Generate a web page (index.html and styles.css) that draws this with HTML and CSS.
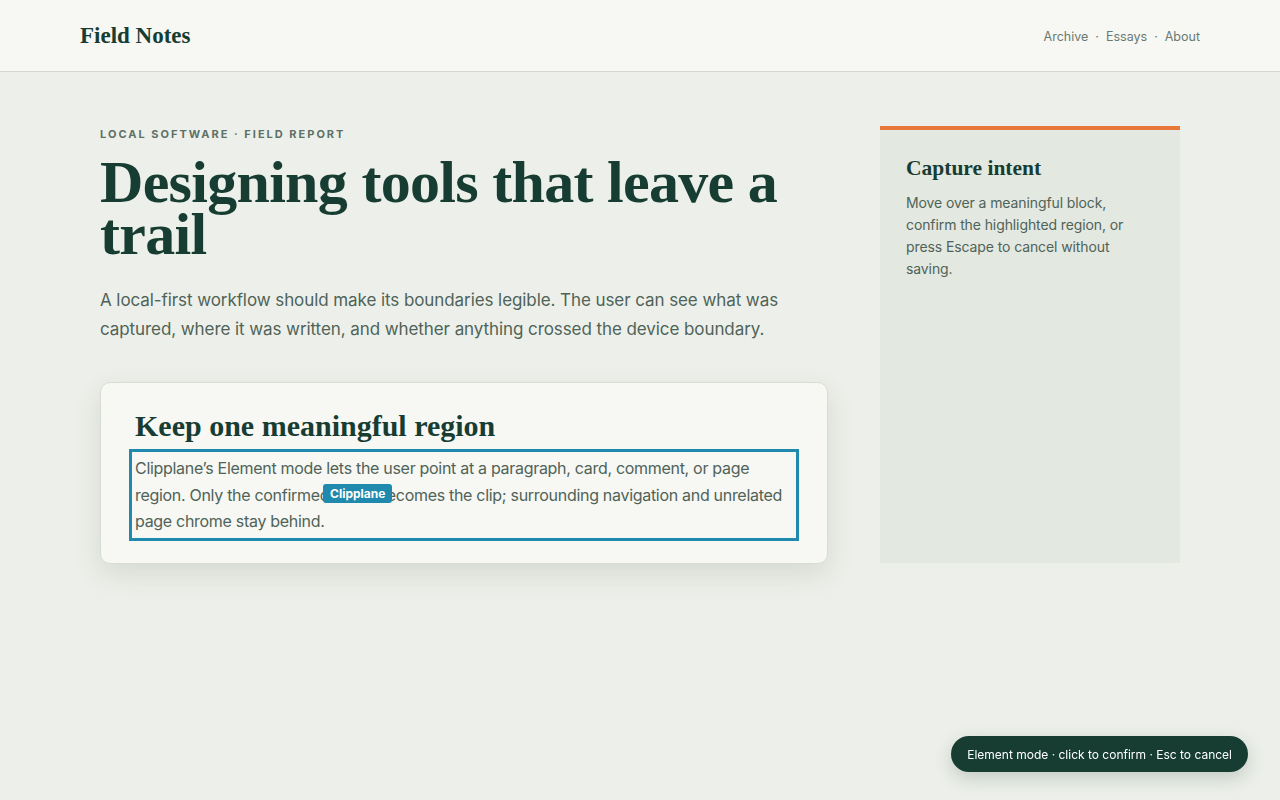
FILE: index.html
```html
<!DOCTYPE html>
<html lang="en">
<head>
  <meta charset="UTF-8">
  <title>Field Notes</title>
  <meta name="viewport" content="width=device-width, initial-scale=1.0">
  <link rel="stylesheet" href="styles.css">
</head>
<body>

  <!-- top bar -->
  <header class="site-header">
    <a class="brand" href="#">Field Notes</a>
    <nav class="site-nav">
      <a href="#">Archive</a>
      <span class="dot">·</span>
      <a href="#">Essays</a>
      <span class="dot">·</span>
      <a href="#">About</a>
    </nav>
  </header>

  <main class="layout">
    <article class="story">
      <p class="eyebrow">Local software · Field report</p>
      <h1>Designing tools that leave a trail</h1>
      <p class="lede">A local-first workflow should make its boundaries legible. The user can see what was captured, where it was written, and whether anything crossed the device boundary.</p>

      <section class="card">
        <h2>Keep one meaningful region</h2>
        <p class="picked">
          Clipplane’s Element mode lets the user point at a paragraph, card, comment, or page region. Only the confirmed block becomes the clip; surrounding navigation and unrelated page chrome stay behind.
          <span class="badge">Clipplane</span>
        </p>
      </section>
    </article>

    <aside class="side">
      <h3>Capture intent</h3>
      <p>Move over a meaningful block, confirm the highlighted region, or press Escape to cancel without saving.</p>
    </aside>
  </main>

  <!-- mode toast -->
  <div class="toast">Element mode · click to confirm · Esc to cancel</div>

</body>
</html>
```

FILE: styles.css
```css
body {
  margin: 0;
  padding: 0;
  background: #edf0ea;
  font-family: Inter, 'Noto Sans', sans-serif;
  color: #173d33;
  height: 100vh;
  overflow: hidden;
}

a {
  color: inherit;
  text-decoration: none;
}

/* header */
.site-header {
  height: 72px;
  box-sizing: border-box;
  display: flex;
  align-items: center;
  justify-content: space-between;
  padding: 0 80px;
  background: #f7f7f3;
  border-bottom: 1px solid #d3d7d0;
}

.brand {
  font-family: 'Liberation Serif', 'DejaVu Serif', serif;
  font-weight: 700;
  font-size: 23px;
  color: #173d33;
  padding-top: 1px;
}

.site-nav {
  display: flex;
  gap: 7px;
  font-size: 12.5px;
  color: #6a7a71;
  padding-top: 2px;
}

/* main columns */
.layout {
  display: flex;
  gap: 52px;
  padding: 54px 100px 0;
}

.story {
  width: 728px;
}

.eyebrow {
  margin: 0;
  padding-top: 1px;
  font-size: 11px;
  font-weight: 700;
  letter-spacing: 2px;
  text-transform: uppercase;
  color: #5d7166;
}

h1 {
  margin: 15px 0 0;
  font-family: 'Liberation Serif', 'DejaVu Serif', serif;
  font-weight: 700;
  font-size: 60px;
  line-height: 52px;
  letter-spacing: -0.7px;
  color: #173d33;
}

.lede {
  margin: 26px 0 0;
  font-size: 17px;
  line-height: 29px;
  letter-spacing: -0.08px;
  color: #4f6358;
}

.card {
  margin-top: 38px;
  background: #f7f7f3;
  border: 1px solid #d8dcd4;
  border-radius: 10px;
  padding: 26px 34px 28px;
  box-shadow: 0 10px 28px rgba(40, 60, 45, 0.12);
}

.card h2 {
  margin: 0 0 12px;
  font-family: 'Liberation Serif', 'DejaVu Serif', serif;
  font-weight: 700;
  font-size: 30px;
  line-height: 34px;
  color: #173d33;
}

.picked {
  position: relative;
  margin: 0;
  font-size: 16px;
  line-height: 26.5px;
  letter-spacing: -0.3px;
  color: #4f6358;
  outline: 3px solid #1f8aad;
  outline-offset: 3px;
}

.badge {
  position: absolute;
  left: 188px;
  top: 29px;
  padding: 0 7px;
  height: 19px;
  line-height: 19px;
  background: #1f8aad;
  color: #fff;
  font-size: 12px;
  font-weight: 700;
  letter-spacing: 0;
  border-radius: 3px;
}

/* sidebar */
.side {
  width: 300px;
  height: 437px;
  box-sizing: border-box;
  background: #e3e8e1;
  border-top: 4px solid #e8773a;
  padding: 26px 26px;
}

.side h3 {
  margin: 0 0 12px;
  font-family: 'Liberation Serif', 'DejaVu Serif', serif;
  font-weight: 700;
  font-size: 21.5px;
  line-height: 24px;
  color: #173d33;
}

.side p {
  margin: 0;
  font-size: 14px;
  line-height: 22px;
  letter-spacing: -0.1px;
  color: #4f6358;
}

/* toast */
.toast {
  position: fixed;
  right: 32px;
  bottom: 28px;
  height: 36px;
  line-height: 37px;
  padding: 0 16px;
  border-radius: 18px;
  background: #173d33;
  color: #fff;
  font-size: 12px;
  box-shadow: 0 6px 18px rgba(20, 50, 40, 0.2);
}
```
